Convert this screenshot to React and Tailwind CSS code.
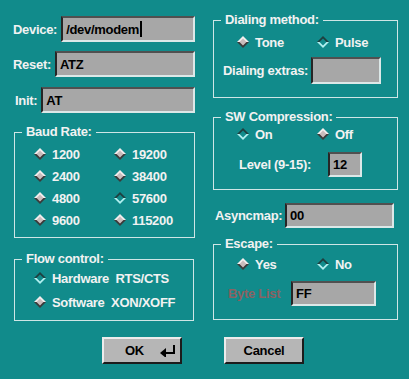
import React from 'react'

const sunken = 'border-2 border-t-[#505050] border-l-[#262626] border-b-[#dce8e8] border-r-[#dce8e8] bg-[#a7a7a7]'
const raised = 'border-2 border-t-[#ececec] border-l-[#ececec] border-b-[#1c1c1c] border-r-[#1c1c1c] bg-[#b6b6b6]'

const Diamond = ({ on }) => (
  <svg width="12" height="12" viewBox="0 0 12 12" className="shrink-0">
    <polygon points="0,6 6,0 12,6" fill={on ? '#1f3f3f' : '#f4eeee'} />
    <polygon points="0,6 6,12 12,6" fill={on ? '#b2f0f0' : '#3a3a3a'} />
    <polygon points="6,2.5 9.5,6 6,9.5 2.5,6" fill={on ? '#118b8b' : '#c9bcbc'} />
  </svg>
)

const Radio = ({ label, on, h = 'h-[22px]' }) => (
  <div className={`flex items-center gap-[6px] ${h} whitespace-pre`}>
    <Diamond on={on} />
    <span>{label}</span>
  </div>
)

const Input = ({ value, cursor, className = '' }) => (
  <div className={`${sunken} h-full flex items-center pl-[3px] text-black shrink-0 ${className}`}>
    <span>{value}</span>
    {cursor && <span className="w-[2px] h-[16px] bg-black ml-[1px]" />}
  </div>
)

const Field = ({ label, value, cursor, className = '' }) => (
  <div className={`flex items-center gap-[4px] h-[26px] ${className}`}>
    <span className="whitespace-nowrap">{label}</span>
    <Input value={value} cursor={cursor} className="flex-1 shrink" />
  </div>
)

const Group = ({ title, className = '', children }) => (
  <fieldset className={`border border-[#cfe6e6] ${className}`}>
    <legend className="ml-[7px] px-[4px] leading-[14px]">{title}</legend>
    {children}
  </fieldset>
)

export default function App() {
  return (
    <div className="w-[409px] h-[379px] overflow-hidden bg-[#118b8b] text-[#f2f2f2] text-[13px] leading-[15px] tracking-[-0.3px] font-bold font-['Liberation_Sans',Arial,sans-serif]">
      <div className="flex">
        {/* left column */}
        <div className="flex flex-col w-[182px] ml-[13px]">
          <Field label="Device:" value="/dev/modem" cursor className="mt-[16px]" />
          <Field label="Reset:" value="ATZ" className="mt-[9px]" />
          <Field label="Init:" value="AT" className="mt-[10px] pl-[2px]" />

          <Group title="Baud Rate:" className="mt-[12px] mx-[1px] h-[113px]">
            <div className="grid grid-cols-[80px_80px] pl-[19px] pt-[4px]">
              <Radio label="1200" />
              <Radio label="19200" />
              <Radio label="2400" />
              <Radio label="38400" />
              <Radio label="4800" />
              <Radio label="57600" on />
              <Radio label="9600" />
              <Radio label="115200" />
            </div>
          </Group>

          <Group title="Flow control:" className="mt-[14px] mx-[1px] h-[69px]">
            <div className="flex flex-col pl-[19px]">
              <Radio label="Hardware  RTS/CTS" on h="h-[24px]" />
              <Radio label="Software  XON/XOFF" h="h-[24px]" />
            </div>
          </Group>
        </div>

        {/* right column */}
        <div className="flex flex-col w-[181px] ml-[18px]">
          <Group title="Dialing method:" className="mt-[13px] h-[85px]">
            <div className="grid grid-cols-[80px_80px] pl-[23px] pt-[4px]">
              <Radio label="Tone" />
              <Radio label="Pulse" on />
            </div>
            <div className="flex items-center h-[27px] mt-[4px] pl-[9px]">
              <span className="flex-1 min-w-0 whitespace-nowrap">Dialing extras:</span>
              <Input value="" className="mr-[16px] w-[70px]" />
            </div>
          </Group>

          <Group title="SW Compression:" className="mt-[12px] h-[80px]">
            <div className="grid grid-cols-[80px_80px] pl-[23px]">
              <Radio label="On" on h="h-[20px]" />
              <Radio label="Off" h="h-[20px]" />
            </div>
            <div className="flex items-center h-[25px] mt-[8px] pl-[25px]">
              <span className="flex-1 min-w-0 whitespace-nowrap">Level (9-15):</span>
              <Input value="12" className="mr-[35px] w-[34px]" />
            </div>
          </Group>

          <div className="flex items-center h-[25px] mt-[13px] pl-[2px]">
            <span className="flex-1 min-w-0 whitespace-nowrap">Asyncmap:</span>
            <Input value="00" className="w-[109px]" />
          </div>

          <Group title="Escape:" className="mt-[9px] h-[83px]">
            <div className="grid grid-cols-[80px_80px] pl-[23px] pt-[2px]">
              <Radio label="Yes" />
              <Radio label="No" on />
            </div>
            <div className="flex items-center h-[25px] mt-[6px] pl-[14px]">
              <span className="flex-1 min-w-0 whitespace-nowrap text-[#8a6262]">Byte List</span>
              <Input value="FF" className="mr-[21px] w-[85px]" />
            </div>
          </Group>
        </div>
      </div>

      {/* buttons */}
      <div className="flex mt-[16px] pl-[102px] gap-[42px] text-black">
        <button className={`${raised} w-[80px] h-[27px] flex items-center pl-[21px] pr-[4px]`}>
          <span>OK</span>
          <svg width="16" height="12" viewBox="0 0 16 12" className="ml-auto">
            <path d="M14 0 V8 H5" stroke="#000" strokeWidth="2" fill="none" />
            <polygon points="0,8 6,3 6,13" fill="#000" />
          </svg>
        </button>
        <button className={`${raised} w-[80px] h-[27px] flex items-center justify-center`}>
          Cancel
        </button>
      </div>
    </div>
  )
}
